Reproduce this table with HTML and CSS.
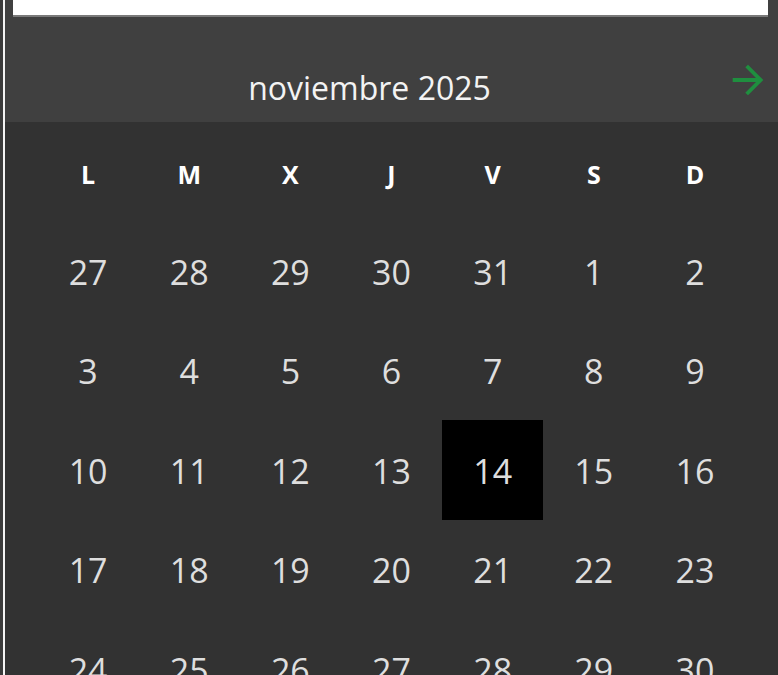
FILE: index.html
```html
<!DOCTYPE html>
<html lang="es">
<head>
<meta charset="utf-8">
<link rel="stylesheet" href="styles.css">
</head>
<body>
<div class="frame">
  <div class="top">
    <div class="input-wrap"><div class="input"></div></div>
    <div class="nav">
      <div class="title">noviembre 2025</div>
      <div class="next">
        <svg width="46" height="46" viewBox="0 0 24 24"><path d="M12 4l-1.41 1.41L16.17 11H4v2h12.17l-5.58 5.59L12 20l8-8z" fill="#1f8f3f"/></svg>
      </div>
    </div>
  </div>
  <div class="grid">
    <div class="dow">L</div><div class="dow">M</div><div class="dow">X</div><div class="dow">J</div><div class="dow">V</div><div class="dow">S</div><div class="dow">D</div>
    <div class="day">27</div><div class="day">28</div><div class="day">29</div><div class="day">30</div><div class="day">31</div><div class="day">1</div><div class="day">2</div>
    <div class="day">3</div><div class="day">4</div><div class="day">5</div><div class="day">6</div><div class="day">7</div><div class="day">8</div><div class="day">9</div>
    <div class="day">10</div><div class="day">11</div><div class="day">12</div><div class="day">13</div><div class="day sel">14</div><div class="day">15</div><div class="day">16</div>
    <div class="day">17</div><div class="day">18</div><div class="day">19</div><div class="day">20</div><div class="day">21</div><div class="day">22</div><div class="day">23</div>
    <div class="day">24</div><div class="day">25</div><div class="day">26</div><div class="day">27</div><div class="day">28</div><div class="day">29</div><div class="day">30</div>
  </div>
</div>
</body>
</html>
```
FILE: styles.css
```css
html, body {
  margin: 0;
  padding: 0;
  height: 100%;
  overflow: hidden;
}
body {
  background: #3b3b3b;
  font-family: "Open Sans", "Noto Sans", sans-serif;
}
.frame {
  margin-left: 3px;
  border-left: 2px solid #f4f4f4;
  height: 100%;
  background: #323232;
}
.top {
  background: #404040;
  height: 121.5px;
  display: flex;
  flex-direction: column;
}
.input-wrap {
  padding: 0 10px 0 8px;
}
.input {
  height: 15px;
  background: #fff;
  border-bottom: 2px solid #7a7a7a;
}
.nav {
  flex: 1;
  display: flex;
  align-items: flex-start;
  padding: 0 7px 0 9px;
}
.title {
  flex: 1;
  text-align: center;
  color: #f3f3f3;
  font-size: 32px;
  line-height: 44px;
  padding-top: 49px;
}
.next {
  width: 46px;
  height: 46px;
  margin-top: 40px;
}
.next svg {
  display: block;
}
.grid {
  display: grid;
  grid-template-columns: repeat(7, 1fr);
  grid-auto-rows: 99.5px;
  padding: 0 32.5px;
}
.dow, .day {
  display: flex;
  align-items: center;
  justify-content: center;
}
.dow {
  color: #fff;
  font-weight: 700;
  font-size: 25px;
  padding-top: 6px;
}
.day {
  color: #dedede;
  font-size: 34px;
  padding-top: 2px;
}
.sel {
  background: #000;
}
```
